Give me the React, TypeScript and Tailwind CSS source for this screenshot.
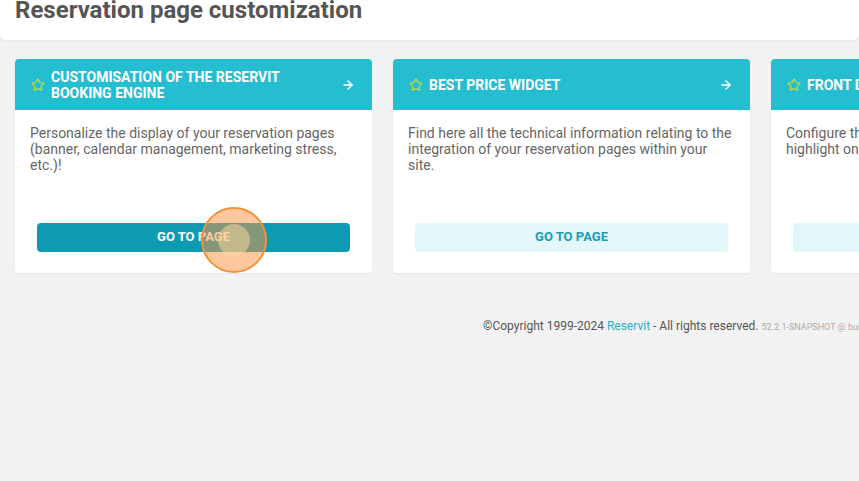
import { ArrowRight, Star } from "lucide-react";

type Card = {
  title: string;
  text: string;
  active?: boolean;
};

const cards: Card[] = [
  {
    title: "Customisation of the Reservit booking engine",
    text: "Personalize the display of your reservation pages (banner, calendar management, marketing stress, etc.)!",
    active: true,
  },
  {
    title: "Best price widget",
    text: "Find here all the technical information relating to the integration of your reservation pages within your site.",
  },
  {
    title: "Front desk offers",
    text: "Configure the services and packages you want to highlight on your reservation pages.",
  },
];

export default function App() {
  return (
    <div className="relative w-[859px] h-[481px] overflow-hidden bg-[#f2f2f2] font-['Roboto',sans-serif]">
      {/* Page header */}
      <header className="h-[40px] bg-white rounded-b-md shadow-[0_1px_3px_rgba(0,0,0,0.06)] px-[15px]">
        <h1 className="text-[24px] leading-[20px] font-bold text-[#555555] whitespace-nowrap">
          Reservation page customization
        </h1>
      </header>

      {/* Cards */}
      <div className="mt-[19px] pl-[15px] flex gap-[21px]">
        {cards.map((card) => (
          <div
            key={card.title}
            className="w-[357px] h-[214px] shrink-0 flex flex-col bg-white rounded shadow-[0_1px_2px_rgba(0,0,0,0.06)]"
          >
            <div className="h-[51px] flex items-center gap-[6px] pl-[16px] pr-[17px] bg-[#25bdd0] rounded-t">
              <Star className="w-[14px] h-[14px] shrink-0 text-[#cddc39]" strokeWidth={2} />
              <span className="flex-1 text-[14px] leading-[16px] font-bold uppercase text-white pr-[50px]">
                {card.title}
              </span>
              <ArrowRight className="w-[14px] h-[14px] shrink-0 text-white" strokeWidth={2.5} />
            </div>
            <p className="px-[15px] pt-[15px] text-[14px] leading-[16px] text-[#666666]">{card.text}</p>
            <button
              className={`mt-auto mx-[22px] mb-[21px] h-[29px] pb-[2px] rounded text-[13px] font-bold uppercase ${
                card.active ? "bg-[#0f9ab4] text-white" : "bg-[#e3f6f9] text-[#1b9db5]"
              }`}
            >
              Go to page
            </button>
          </div>
        ))}
      </div>

      {/* Footer */}
      <footer className="mt-[45px] pl-[483px] whitespace-nowrap text-[12px] leading-[16px] text-[#555555]">
        ©Copyright 1999-2024 <span className="text-[#2aaec2]">Reservit</span> - All rights reserved.{" "}
        <span className="text-[9px] text-[#aaaaaa]">52.2.1-SNAPSHOT @ build-server</span>
      </footer>

      {/* Click indicator */}
      <div className="absolute left-[201px] top-[207px] w-[66px] h-[66px] rounded-full border-2 border-[#f0923a] bg-[#fe923e]/50 flex items-center justify-center">
        <div className="w-[32px] h-[32px] rounded-full bg-[#ffd9a0]/50" />
      </div>
    </div>
  );
}
